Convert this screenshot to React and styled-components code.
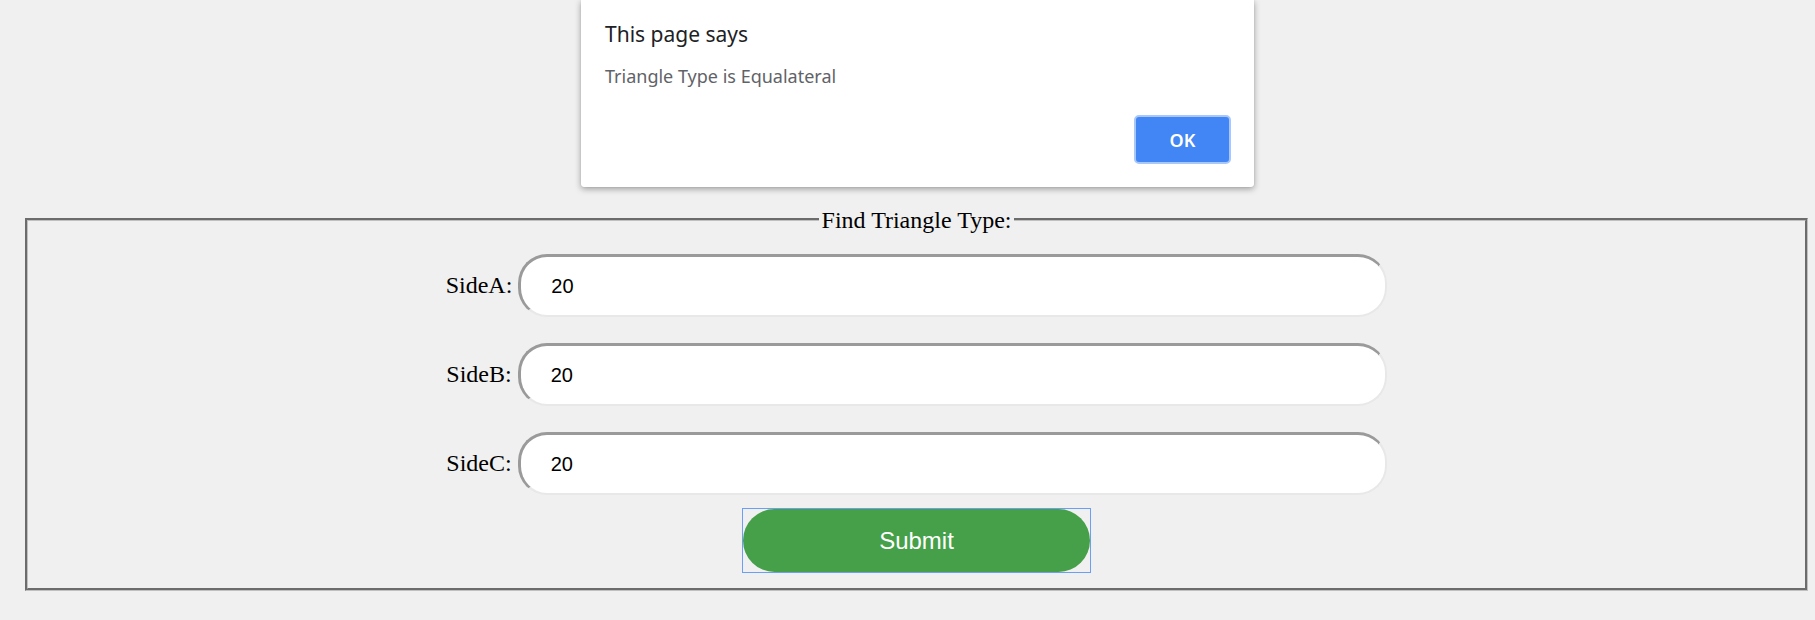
import React from "react";
import styled, { createGlobalStyle } from "styled-components";

const GlobalStyle = createGlobalStyle`
  html, body {
    margin: 0;
    padding: 0;
    background: #f0f0f0;
  }
  body {
    font-family: "Liberation Serif", "Times New Roman", serif;
  }
`;

const Page = styled.div`
  position: relative;
  width: 1815px;
  height: 620px;
  box-sizing: border-box;
  padding: 206px 7px 0 25px;
  overflow: hidden;
`;

const Fieldset = styled.fieldset`
  margin: 0;
  padding: 21px 15px 15px;
  border: 3px groove #c0c0c0;
  min-width: 0;
  display: flex;
  flex-direction: column;
  align-items: center;
`;

const Legend = styled.legend`
  margin: 0 auto;
  padding: 0 3px;
  font-family: "Liberation Serif", "Times New Roman", serif;
  font-size: 24px;
  line-height: 27px;
  color: #000;
`;

const LegendText = styled.span`
  position: relative;
  top: 1px;
`;

const Row = styled.div`
  display: flex;
  align-items: baseline;
  justify-content: center;
  gap: 6px;
  margin-bottom: ${(p) => p.$gap}px;
`;

const Label = styled.label`
  font-family: "Liberation Serif", "Times New Roman", serif;
  font-size: 24px;
  color: #000;
`;

const Input = styled.input`
  box-sizing: border-box;
  width: 869px;
  height: 63px;
  padding: 0 0 0 30px;
  border-style: solid;
  border-width: 3px 2px 2px 3px;
  border-color: #9a9a9a #e8e8e8 #e8e8e8 #9a9a9a;
  border-radius: 29px;
  background: #fff;
  font-family: "Liberation Sans", Arial, sans-serif;
  font-size: 20px;
  color: #000;
  outline: none;
`;

const FocusFrame = styled.div`
  border: 1px solid #6b9ff5;
  line-height: 0;
`;

const SubmitButton = styled.button`
  width: 347px;
  height: 63px;
  border: none;
  border-radius: 32px;
  background: #45a049;
  color: #fff;
  font-family: "Liberation Sans", Arial, sans-serif;
  font-size: 24px;
  cursor: pointer;
`;

const Dialog = styled.div`
  position: absolute;
  top: 0;
  left: 581px;
  width: 673px;
  height: 187px;
  box-sizing: border-box;
  padding: 20px 23px 23px 24px;
  background: #fff;
  border-radius: 0 0 3px 3px;
  box-shadow: 0 2px 6px rgba(0, 0, 0, 0.35), 0 0 1px rgba(0, 0, 0, 0.2);
  display: flex;
  flex-direction: column;
  font-family: "Noto Sans", "Open Sans", sans-serif;
  z-index: 10;
`;

const DialogTitle = styled.div`
  font-size: 21px;
  line-height: 29px;
  color: #202124;
`;

const DialogMessage = styled.div`
  margin-top: 15px;
  font-size: 18px;
  line-height: 25px;
  color: #5f6368;
`;

const DialogActions = styled.div`
  margin-top: auto;
  display: flex;
  justify-content: flex-end;
`;

const OkButton = styled.button`
  width: 97px;
  height: 49px;
  box-sizing: border-box;
  border: 2px solid #a8c7fa;
  border-radius: 5px;
  background: #4285f4;
  color: #fff;
  font-family: "Noto Sans", "Open Sans", sans-serif;
  font-size: 18px;
  font-weight: 600;
`;

const sides = ["SideA", "SideB", "SideC"];

export default function App() {
  return (
    <>
      <GlobalStyle />
      <Page>
        <Dialog>
          <DialogTitle>This page says</DialogTitle>
          <DialogMessage>Triangle Type is Equalateral</DialogMessage>
          <DialogActions>
            <OkButton>OK</OkButton>
          </DialogActions>
        </Dialog>
        <Fieldset>
          <Legend>
            <LegendText>Find Triangle Type:</LegendText>
          </Legend>
          {sides.map((s, i) => (
            <Row key={s} $gap={i < 2 ? 26 : 13}>
              <Label htmlFor={s}>{s}:</Label>
              <Input id={s} type="text" defaultValue="20" />
            </Row>
          ))}
          <FocusFrame>
            <SubmitButton type="submit">Submit</SubmitButton>
          </FocusFrame>
        </Fieldset>
      </Page>
    </>
  );
}
